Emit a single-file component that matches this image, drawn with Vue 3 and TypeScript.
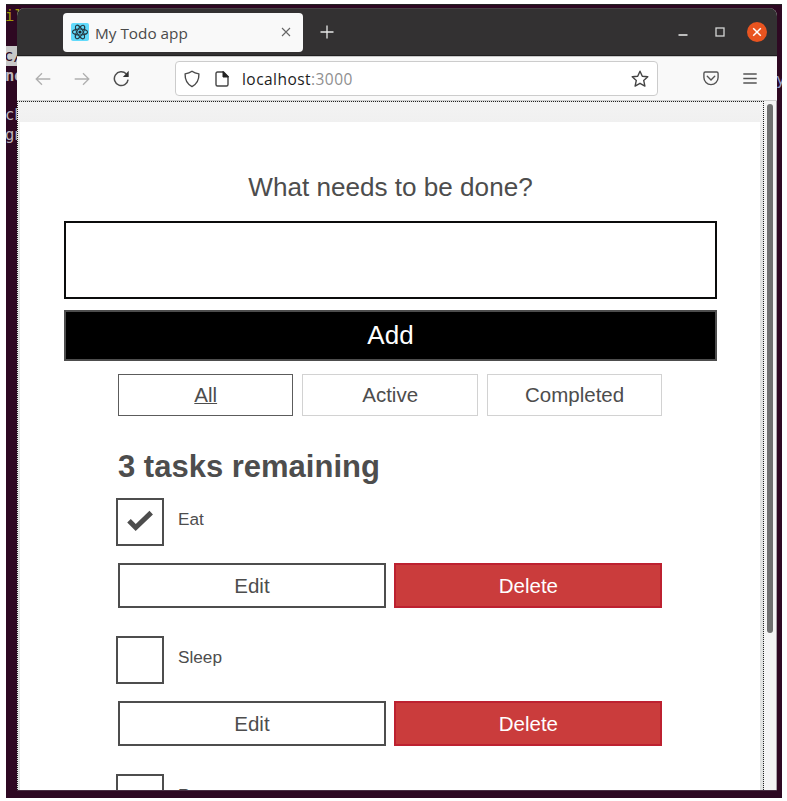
<script setup lang="ts">
import { ref, computed } from 'vue'

interface Task {
  id: number
  name: string
  done: boolean
}

const tasks = ref<Task[]>([
  { id: 1, name: 'Eat', done: true },
  { id: 2, name: 'Sleep', done: false },
  { id: 3, name: 'Repeat', done: false },
])
const filters = ['All', 'Active', 'Completed']
const activeFilter = ref('All')
const draft = ref('')
const heading = computed(() => `${tasks.value.length} tasks remaining`)

function toggle(task: Task) {
  task.done = !task.done
}
function remove(id: number) {
  tasks.value = tasks.value.filter((t) => t.id !== id)
}
function add() {
  if (!draft.value.trim()) return
  tasks.value.push({ id: Date.now(), name: draft.value, done: false })
  draft.value = ''
}
</script>

<template>
  <div class="screen">
    <div class="desktop">
      <span class="term t1">il</span>
      <span class="term t2">c/</span>
      <span class="term t3">ne</span>
      <span class="term t4">ch</span>
      <span class="term t5">gn</span>
      <span class="term t6">y</span>

      <div class="window">
        <header class="titlebar">
          <div class="tab">
            <svg class="favicon" width="18" height="18" viewBox="0 0 18 18">
              <rect width="18" height="18" rx="2" fill="#61dafb" />
              <g fill="none" stroke="#263c46" stroke-width="1.1">
                <ellipse cx="9" cy="9" rx="7.6" ry="3" />
                <ellipse cx="9" cy="9" rx="7.6" ry="3" transform="rotate(60 9 9)" />
                <ellipse cx="9" cy="9" rx="7.6" ry="3" transform="rotate(120 9 9)" />
              </g>
              <circle cx="9" cy="9" r="1.6" fill="#20232a" />
            </svg>
            <span class="tab-title">My Todo app</span>
            <svg class="tab-close" width="10" height="10" viewBox="0 0 10 10">
              <path d="M1 1l8 8M9 1L1 9" stroke="#666" stroke-width="1.1" />
            </svg>
          </div>
          <svg class="plus" width="14" height="14" viewBox="0 0 14 14">
            <path d="M7 .5v13M.5 7h13" stroke="#e8e8e8" stroke-width="1.3" />
          </svg>
          <div class="controls">
            <svg width="10" height="10" viewBox="0 0 10 10"><path d="M.5 8h9" stroke="#bdbdbd" stroke-width="2" /></svg>
            <svg width="10" height="10" viewBox="0 0 10 10"><rect x="1" y="1" width="8" height="8" fill="none" stroke="#d5d5d5" stroke-width="1.3" /></svg>
            <svg width="20" height="20" viewBox="0 0 20 20">
              <circle cx="10" cy="10" r="10" fill="#e95420" />
              <path d="M6.2 6.2l7.6 7.6M13.8 6.2l-7.6 7.6" stroke="#fff" stroke-width="1.5" />
            </svg>
          </div>
        </header>

        <nav class="toolbar">
          <svg class="back" width="16" height="14" viewBox="0 0 16 14"><path d="M15.3 7H1.2M7 1.2L1.2 7 7 12.8" fill="none" stroke="#b0b0b0" stroke-width="1.3" /></svg>
          <svg class="forward" width="16" height="14" viewBox="0 0 16 14"><path d="M.7 7h14.1M9 1.2L14.8 7 9 12.8" fill="none" stroke="#b0b0b0" stroke-width="1.3" /></svg>
          <svg class="reload" width="17" height="17" viewBox="0 0 17 17">
            <path d="M15.1 9.6A6.9 6.9 0 1 1 13.2 3.8" fill="none" stroke="#4e4e4e" stroke-width="1.5" />
            <path d="M15.7.8v6.1H9.9z" fill="#333" />
          </svg>
          <div class="urlbar">
            <svg class="shield" width="18" height="18" viewBox="0 0 18 18"><path d="M9 1.2c2 1.5 4.300 2.300 6.900 2.700.2 5.500-1.700 10-6.900 12.700C3.800 13.900 1.900 9.400 2.100 3.900 4.700 3.500 7 2.700 9 1.200z" fill="none" stroke="#4b4b4b" stroke-width="1.400" stroke-linejoin="round" /></svg>
            <svg class="page-icon" width="14" height="16" viewBox="0 0 14 16">
              <path d="M8.500 1H2.500Q1 1 1 2.500v11Q1 15 2.500 15h9q1.500 0 1.500-1.500v-8z" fill="none" stroke="#444" stroke-width="1.400" />
              <path d="M8 .5v5.500h5.500z" fill="#222" stroke="#222" />
            </svg>
            <span class="url"><span class="host">localhost</span>:3000</span>
            <svg class="star" width="18" height="18" viewBox="0 0 18 18"><path d="M9 1.200l2.300 5 5.500.5-4.100 3.700 1.200 5.700L9 13.300l-4.900 2.800 1.200-5.700L1.200 6.700l5.500-.5z" fill="none" stroke="#444" stroke-width="1.400" stroke-linejoin="round" /></svg>
          </div>
          <svg class="pocket" width="16" height="15" viewBox="0 0 16 15">
            <path d="M2.300 1h11.400q1.400 0 1.400 1.400v4.100a7.100 7.100 0 0 1-14.200 0V2.400Q.9 1 2.300 1z" fill="none" stroke="#555" stroke-width="1.400" />
            <path d="M4.300 5.300L8 8.900l3.700-3.600" fill="none" stroke="#555" stroke-width="1.400" stroke-linecap="round" />
          </svg>
          <svg class="menu" width="14" height="12" viewBox="0 0 14 12"><path d="M.3 1h13.400M.3 5.500h13.400M.3 10h13.400" stroke="#555" stroke-width="1.300" /></svg>
        </nav>

        <div class="viewport">
          <div class="page">
            <main class="app">
              <form class="new-task" @submit.prevent="add">
                <label for="new-todo" class="prompt">What needs to be done?</label>
                <input id="new-todo" v-model="draft" class="entry" type="text" autocomplete="off" />
                <button type="submit" class="add">Add</button>
              </form>
              <div class="body">
                <div class="filters">
                  <button
                    v-for="f in filters"
                    :key="f"
                    type="button"
                    class="filter"
                    :class="{ pressed: f === activeFilter }"
                    @click="activeFilter = f"
                  >{{ f }}</button>
                </div>
                <h2 class="heading">{{ heading }}</h2>
                <ul class="list">
                  <li v-for="task in tasks" :key="task.id" class="task">
                    <div class="row" @click="toggle(task)">
                      <span class="box">
                        <svg v-if="task.done" class="check" width="28" height="24" viewBox="0 0 28 24">
                          <path d="M3 11.800l6.700 6.800L25.200 3.600" fill="none" stroke="#4d4d4d" stroke-width="5" />
                        </svg>
                      </span>
                      <span class="name">{{ task.name }}</span>
                    </div>
                    <div class="actions">
                      <button type="button" class="btn">Edit</button>
                      <button type="button" class="btn danger" @click="remove(task.id)">Delete</button>
                    </div>
                  </li>
                </ul>
              </div>
            </main>
          </div>
          <div class="scrollbar"><div class="thumb"></div></div>
        </div>
      </div>
    </div>
  </div>
</template>

<style>
body {
  margin: 0;
  background: #fff;
  overflow: hidden;
}
</style>

<style scoped>
.screen {
  box-sizing: border-box;
  width: 787px;
  height: 801px;
  padding: 4px 5px 3px 6px;
  background: #fff;
  font-family: "Liberation Sans", Arial, sans-serif;
  color: #4d4d4d;
}
.desktop {
  position: relative;
  box-sizing: border-box;
  height: 794px;
  padding: 3px 5px 7px 11px;
  background: #2e0822;
  border-top: 1px solid #242224;
  overflow: hidden;
}
.term {
  position: absolute;
  left: -1px;
  font: 15.5px/20px "DejaVu Sans Mono", monospace;
  color: #bdb5bb;
  white-space: pre;
}
.t1 { top: 1px; color: #a49a08; }
.t2 { top: 41px; left: 0; width: 12px; background: #c8c8c8; color: #2e0822; text-indent: -2px; }
.t3 { top: 61px; font-weight: bold; }
.t4 { top: 100px; }
.t5 { top: 120px; }
.t6 { top: 65px; left: 770px; color: #98a0c8; }
.window {
  position: relative;
  box-sizing: border-box;
  height: 783px;
  display: flex;
  flex-direction: column;
  border-radius: 8px 8px 0 0;
  border-bottom: 1px solid #4a3044;
  overflow: hidden;
  background: #f9f9f9;
}
.titlebar {
  flex: none;
  box-sizing: border-box;
  height: 48px;
  display: flex;
  align-items: center;
  padding: 0 10px 0 46px;
  background: #333132;
  border-top: 1px solid #454344;
  border-bottom: 1px solid #201f20;
}
.tab {
  box-sizing: border-box;
  width: 240px;
  height: 39px;
  display: flex;
  align-items: center;
  padding: 0 12px 0 8px;
  border-radius: 4px;
  background: #f9f9f9;
  color: #4a4a4a;
}
.tab-title {
  margin-left: 6px;
  font: 500 15.3px/20px "Open Sans", "Noto Sans", sans-serif;
  padding-top: 1px;
}
.tab-close { margin-left: auto; }
.plus { margin-left: 17px; }
.controls {
  margin-left: auto;
  display: flex;
  align-items: center;
  gap: 27px;
}
.controls svg:last-child { margin-left: -5px; }
.toolbar {
  flex: none;
  box-sizing: border-box;
  height: 45px;
  display: flex;
  align-items: center;
  padding: 0 19px 0 18px;
  background: #f9f9f9;
  border-top: 1px solid #c8c8c8;
  border-bottom: 1px solid #cfcfcf;
}
.forward { margin-left: 23px; }
.reload { margin-left: 23px; }
.urlbar {
  box-sizing: border-box;
  width: 483px;
  height: 35px;
  margin-left: 45px;
  display: flex;
  align-items: center;
  padding: 0 8px 0 7px;
  border: 1px solid #ccc;
  border-radius: 4px;
  background: #fff;
}
.page-icon { margin-left: 14px; }
.url {
  margin-left: 13px;
  font: 500 15.5px/20px "Open Sans", "Noto Sans", sans-serif;
  letter-spacing: 0.45px;
  color: #8f8f8f;
}
.host { color: #1c1c1c; }
.star { margin-left: auto; }
.pocket { margin-left: 45px; }
.menu { margin-left: 24px; }
.viewport {
  flex: 1;
  min-height: 0;
  display: flex;
}
.page {
  flex: none;
  box-sizing: border-box;
  width: 747px;
  height: 689px;
  padding: 20px 2px 0;
  border: 1px dotted #222;
  border-bottom: 0;
  background: linear-gradient(#f3f3f3, #f0f0f0 20px, #e0e2e1 60px);
  overflow: hidden;
}
.app {
  box-sizing: border-box;
  width: 740px;
  height: 800px;
  padding: 50px 43px 0 44px;
  background: #fff;
}
.new-task {
  display: flex;
  flex-direction: column;
}
.prompt {
  height: 49px;
  font-size: 26.100px;
  line-height: 31px;
  text-align: center;
}
.entry {
  box-sizing: border-box;
  height: 78px;
  margin: 0;
  padding: 0 16px;
  border: 2px solid #0b0c0c;
  border-radius: 0;
  font: inherit;
  font-size: 26px;
  background: #fff;
  outline: none;
}
button {
  box-sizing: border-box;
  margin: 0;
  padding: 0;
  border-radius: 0;
  font-family: inherit;
  color: #4d4d4d;
  cursor: pointer;
}
.add {
  height: 51px;
  margin-top: 11px;
  border: 2px solid #4d4d4d;
  background: #000;
  color: #fff;
  font-size: 26px;
}
.body { padding: 13px 54.700px 0 54px; }
.filters {
  display: grid;
  grid-template-columns: repeat(3, 1fr);
  gap: 9px;
}
.filter {
  height: 42px;
  border: 1px solid #d2d2d2;
  background: #fff;
  font-size: 20.500px;
}
.pressed {
  border-color: #5c5c5c;
  text-decoration: underline;
  text-decoration-thickness: 1px;
}
.heading {
  margin: 33px 0 0;
  font-size: 31px;
  line-height: 36px;
  font-weight: bold;
}
.list {
  margin: 13px 0 0;
  padding: 0;
  list-style: none;
}
.task { height: 138px; }
.row {
  display: flex;
  margin-left: -2px;
  height: 48px;
}
.box {
  box-sizing: border-box;
  width: 48px;
  height: 48px;
  display: flex;
  align-items: center;
  justify-content: center;
  border: 2px solid #4d4d4d;
}
.check { margin-bottom: 2px; }
.name {
  margin-left: 14px;
  font-size: 17.200px;
  line-height: 43px;
}
.actions {
  display: grid;
  grid-template-columns: 1fr 1fr;
  gap: 8.500px;
  margin-top: 17px;
}
.btn {
  height: 45px;
  border: 2px solid #4d4d4d;
  background: #fff;
  font-size: 20.500px;
}
.danger {
  border-color: #bd2130;
  background: #ca3c3c;
  color: #fff;
}
.scrollbar {
  flex: 1;
  padding: 3px 3px 0 3px;
  background: #f4f4f4;
  border-right: 1px solid #aaa3a8;
}
.thumb {
  width: 6px;
  height: 529px;
  border-radius: 3px;
  background: #6f6f6f;
}
</style>
